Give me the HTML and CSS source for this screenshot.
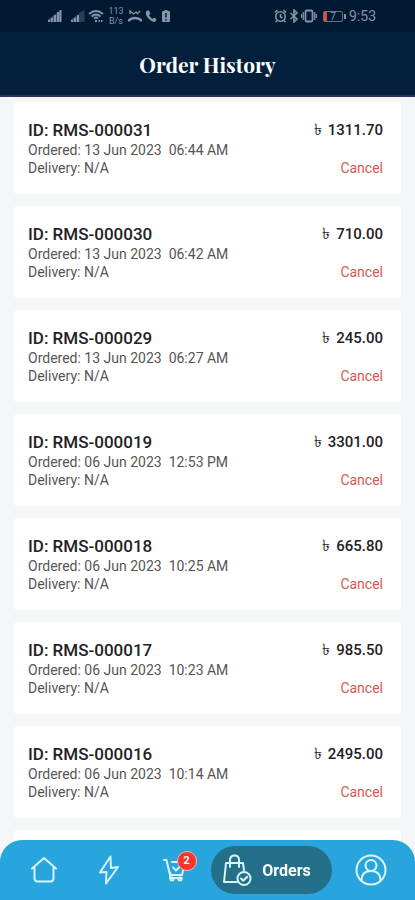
FILE: index.html
```html
<!DOCTYPE html>
<html lang="en">
<head>
<meta charset="utf-8">
<meta name="viewport" content="width=device-width, initial-scale=1">
<title>Order History</title>
<link rel="stylesheet" href="styles.css">
</head>
<body>
<div class="app">
  <div class="status">
    <div class="status-group">
      <svg width="14" height="14" viewBox="0 0 14 14" fill="currentColor"><path d="M0 13V10.500L13 1v12z" opacity=".45"/><path d="M0 11h2v2H0zM3 9h2v4H3zM6 6h2v7H6zM9 3h2v10H9zM11.500 1h2v12h-2z"/></svg>
      <svg class="weak" width="14" height="14" viewBox="0 0 14 14" fill="currentColor"><path d="M0 13V10.500L8 5v8z" opacity=".45"/><path d="M0 11h2v2H0zM3 9h2v4H3zM6 6h2v7H6z"/><path opacity=".3" d="M8 4l5.500-3v12H8z"/></svg>
      <svg width="16" height="14" viewBox="0 0 16 14" fill="none" stroke="currentColor" stroke-width="1.800"><path d="M1 5Q8-1 15 5M3.500 7.500Q8 3.500 12.500 7.500M6 9.500q2-2 4 0"/><path d="M7 12h2M10.500 12h1.500M13 12h1.500"/></svg>
      <span class="speed">113<br>B/s</span>
      <svg width="14" height="14" viewBox="0 0 14 14" fill="none" stroke="currentColor"><path stroke-width="1.300" d="M2 5V2l3.500 3L8 3l1.500 1.500L12 2"/><path stroke-width="2.400" d="M1 12.500V11Q7 7 13 11v1.500"/></svg>
      <svg width="12" height="14" viewBox="0 0 12 14" fill="currentColor"><path d="M1 2.500L3.500 1l2 3.500L4 6q1 2.500 3.500 4L9 8.500l2.500 2L10 13Q7 13 3.500 9.500T1 2.500z"/></svg>
      <svg class="cell" width="8" height="14" viewBox="0 0 8 14"><path fill="currentColor" d="M2.500 1h3v1H7q1 0 1 1v9q0 1-1 1H1q-1 0-1-1V3q0-1 1-1h1.500z"/><path stroke="#011931" stroke-width="1.400" d="M4 4v4.500M4 10v1.500"/></svg>
    </div>
    <div class="status-group right">
      <svg width="13" height="14" viewBox="0 0 13 14" fill="none" stroke="currentColor" stroke-width="1.600"><circle cx="6.500" cy="7.500" r="4.700"/><path d="M.8 3.500L3.500 1.200M12.200 3.500L9.500 1.200M6.500 5v3l2 1M3 11.500l-1.500 1.500M10 11.500l1.500 1.500"/></svg>
      <svg width="10" height="14" viewBox="0 0 10 14" fill="none" stroke="currentColor" stroke-width="1.600"><path d="M1.500 4l6.500 6-3 3V1l3 3-6.500 6"/></svg>
      <svg width="16" height="14" viewBox="0 0 16 14" fill="none" stroke="currentColor" stroke-width="1.800"><rect x="4.500" y="1.500" width="7" height="11" rx="1.500"/><path d="M2.300 3v8M13.700 3v8M.6 5v4M15.400 5v4" stroke-width="1.200"/></svg>
      <span class="battery"><span class="charge"></span>7</span>
      <span class="clock">9:53</span>
    </div>
  </div>
  <header class="header"><h1>Order History</h1></header>
  <main class="orders">
    <article class="order"><div><h2>ID: RMS-000031</h2><p>Ordered: 13 Jun 2023&nbsp; 06:44 AM</p><p>Delivery: N/A</p></div><div class="side"><span class="price"><span class="taka">৳</span> 1311.70</span><button type="button">Cancel</button></div></article>
    <article class="order"><div><h2>ID: RMS-000030</h2><p>Ordered: 13 Jun 2023&nbsp; 06:42 AM</p><p>Delivery: N/A</p></div><div class="side"><span class="price"><span class="taka">৳</span> 710.00</span><button type="button">Cancel</button></div></article>
    <article class="order"><div><h2>ID: RMS-000029</h2><p>Ordered: 13 Jun 2023&nbsp; 06:27 AM</p><p>Delivery: N/A</p></div><div class="side"><span class="price"><span class="taka">৳</span> 245.00</span><button type="button">Cancel</button></div></article>
    <article class="order"><div><h2>ID: RMS-000019</h2><p>Ordered: 06 Jun 2023&nbsp; 12:53 PM</p><p>Delivery: N/A</p></div><div class="side"><span class="price"><span class="taka">৳</span> 3301.00</span><button type="button">Cancel</button></div></article>
    <article class="order"><div><h2>ID: RMS-000018</h2><p>Ordered: 06 Jun 2023&nbsp; 10:25 AM</p><p>Delivery: N/A</p></div><div class="side"><span class="price"><span class="taka">৳</span> 665.80</span><button type="button">Cancel</button></div></article>
    <article class="order"><div><h2>ID: RMS-000017</h2><p>Ordered: 06 Jun 2023&nbsp; 10:23 AM</p><p>Delivery: N/A</p></div><div class="side"><span class="price"><span class="taka">৳</span> 985.50</span><button type="button">Cancel</button></div></article>
    <article class="order"><div><h2>ID: RMS-000016</h2><p>Ordered: 06 Jun 2023&nbsp; 10:14 AM</p><p>Delivery: N/A</p></div><div class="side"><span class="price"><span class="taka">৳</span> 2495.00</span><button type="button">Cancel</button></div></article>
    <div class="order"></div>
  </main>
  <nav class="tabs">
    <a href="#home" aria-label="Home"><svg width="28" height="28" viewBox="0 0 28 28"><path d="M2 12.500L14 2l12 10.500M4.500 10.500V22q0 3.500 3.500 3.500h12q3.500 0 3.500-3.500V10.500"/></svg></a>
    <a href="#deals" aria-label="Deals"><svg width="22" height="30" viewBox="0 0 22 30"><path d="M12.500 1.500L2 17.500l6.500-.5L8 28.500 20 12l-7 1z"/></svg></a>
    <a href="#cart" aria-label="Cart"><span class="cart"><svg width="22" height="24" viewBox="0 0 22 24"><path d="M1 2h2.500L7 17h12l2-9M9 4h12M6 13l2 4M10 9.500l3 3 6-6M7 17v3h12"/><circle cx="9" cy="21" r="1.500"/><circle cx="17" cy="21" r="1.500"/></svg><span class="badge">2</span></span></a>
    <a href="#orders" class="active" aria-current="page"><svg width="30" height="32" viewBox="0 0 30 32"><path d="M15 28H2L4 9h17l1 7M8 13V6q0-4.500 4.500-4.500T17 6v7"/><circle cx="22" cy="24.500" r="6.500"/><path d="M19 24.500l2.200 2.200 4-4"/></svg><span>Orders</span></a>
    <a href="#profile" aria-label="Profile"><svg width="32" height="32" viewBox="0 0 32 32"><circle cx="16" cy="16" r="14.500"/><circle cx="16" cy="11.500" r="5.500"/><path d="M6.500 26.500v-1Q7 17 16 17t9.500 8.500v1"/></svg></a>
  </nav>
</div>
</body>
</html>
```
FILE: styles.css
```css
* { box-sizing: border-box; }
body { margin: 0; font-family: Roboto, "Liberation Sans", sans-serif; background: #f3f5f7; color: #222; }
h1, h2, p { margin: 0; }
.app { height: 100vh; display: flex; flex-direction: column; overflow: hidden; }

.status { height: 32px; flex: none; display: flex; justify-content: space-between; align-items: center; padding: 0 39px 0 48px; background: #011931; color: #8496a9; }
.status-group { display: flex; align-items: center; gap: 3px; }
.weak { margin-left: 6px; }
.cell { margin-left: 2px; }
.right { gap: 2px; }
.speed { width: 16px; margin: 0 1px; font-size: 9px; line-height: 10px; text-align: center; }
.battery { position: relative; width: 20px; height: 11px; margin: 0 4px; border: 1px solid #66778b; border-radius: 2px; font-size: 10px; line-height: 9px; text-align: center; }
.battery::after { content: ""; position: absolute; right: -4px; top: 2px; width: 2px; height: 5px; background: #8191a3; }
.charge { position: absolute; left: 0; top: 0; width: 3px; height: 9px; background: #e04a44; }
.clock { font-size: 14px; }

.header { height: 65px; flex: none; display: flex; align-items: center; justify-content: center; background: #02203c; border-bottom: 2px solid #332f5c; }
h1 { font: bold 21px/28px "Playfair Display", "Liberation Serif", serif; color: #fff; }

.orders { flex: 1; min-height: 0; overflow: hidden; display: flex; flex-direction: column; gap: 12px; padding: 5px 14px 0; }
.order { flex: none; min-height: 92px; display: flex; justify-content: space-between; padding: 17px 18px 17px 14px; background: #fff; border-radius: 4px; }
h2 { font-size: 17px; font-weight: 500; line-height: 22px; }
p { font-size: 14px; line-height: 18px; color: #555; }
.side { display: flex; flex-direction: column; justify-content: space-between; align-items: flex-end; }
.price { font-size: 15px; font-weight: 500; line-height: 22px; }
.taka { margin-right: 2px; font-size: 16px; font-weight: 400; line-height: 18px; }
.side button { padding: 0; border: 0; background: none; font: 14px/18px Roboto, "Liberation Sans", sans-serif; color: #cf5b53; }

.tabs { position: fixed; left: 0; right: 0; bottom: 0; height: 60px; display: grid; grid-template-columns: 65fr 65fr 65fr 5fr 121fr 78fr; align-items: center; padding: 0 5px 0 11px; background: #29a5de; border-radius: 22px 22px 0 0; }
.tabs a { display: flex; align-items: center; justify-content: center; color: #fff; text-decoration: none; }
.tabs svg { fill: none; stroke: #d9f4fd; stroke-width: 2; stroke-linejoin: round; stroke-linecap: round; }
.cart { position: relative; display: flex; }
.badge { position: absolute; left: 14px; top: -7px; width: 20px; height: 20px; border: 1px solid #f3b9b5; border-radius: 50%; background: #f4372d; color: #fff; font-size: 11px; font-weight: 700; line-height: 18px; text-align: center; }
.tabs .active { grid-column: 5; height: 48px; gap: 10px; padding-right: 10px; border-radius: 24px; background: #24708a; font-size: 16px; font-weight: 700; }
```
